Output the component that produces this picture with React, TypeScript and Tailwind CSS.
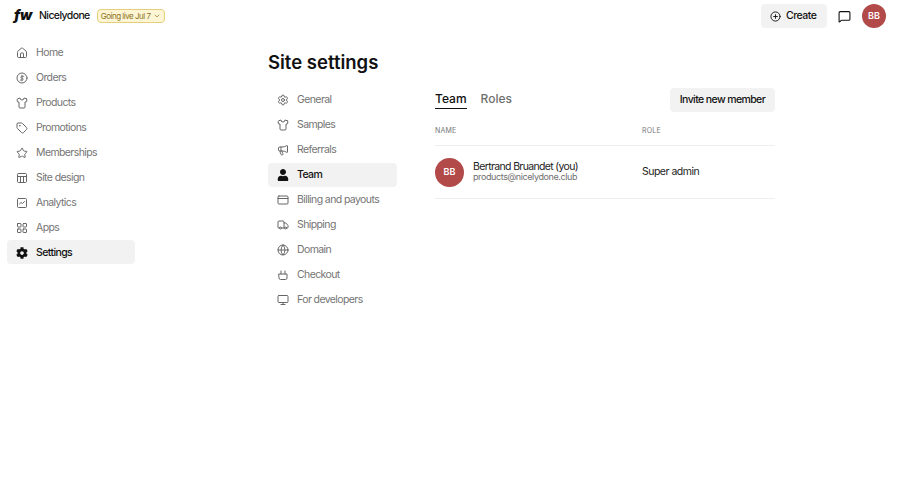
import { ReactNode } from "react"
import {
  ChevronDown,
  CirclePlus,
  Globe,
  Home,
  LayoutGrid,
  Megaphone,
  MessageSquare,
  Monitor,
  Settings,
  Shirt,
  Star,
  Tag,
  Truck,
} from "lucide-react"
import { FaCog, FaUser } from "react-icons/fa"

const iconClass = "w-3 h-3"

function Svg({ children }: { children: ReactNode }) {
  return (
    <svg viewBox="0 0 24 24" fill="none" stroke="currentColor" strokeWidth="2" strokeLinecap="round" strokeLinejoin="round" className={iconClass}>
      {children}
    </svg>
  )
}

const DollarCircle = () => (
  <Svg>
    <circle cx="12" cy="12" r="10" />
    <path d="M15.5 8.5H11a2 2 0 0 0 0 3.8h2a2 2 0 0 1 0 3.8H8.5M12 6.5v11" strokeWidth="1.7" />
  </Svg>
)

const SiteDesign = () => (
  <Svg>
    <rect x="3" y="3" width="18" height="18" rx="2" />
    <path d="M3 9h18M9 9v12M15 9v12" />
  </Svg>
)

const AnalyticsIcon = () => (
  <Svg>
    <rect x="3" y="3" width="18" height="18" rx="2" />
    <path d="m7 14 3-3 3 2 4-4" />
  </Svg>
)

const BillingIcon = () => (
  <Svg>
    <rect x="2" y="4" width="20" height="16" rx="2" />
    <path d="M2 9h20" />
  </Svg>
)

const CheckoutIcon = () => (
  <Svg>
    <path d="M4 10h16v8a3 3 0 0 1-3 3H7a3 3 0 0 1-3-3z" />
    <path d="M8 10V4M16 10V4" />
  </Svg>
)

const mainNav: { label: string; icon: ReactNode; active?: boolean }[] = [
  { label: "Home", icon: <Home className={iconClass} /> },
  { label: "Orders", icon: <DollarCircle /> },
  { label: "Products", icon: <Shirt className={iconClass} /> },
  { label: "Promotions", icon: <Tag className={iconClass} /> },
  { label: "Memberships", icon: <Star className={iconClass} /> },
  { label: "Site design", icon: <SiteDesign /> },
  { label: "Analytics", icon: <AnalyticsIcon /> },
  { label: "Apps", icon: <LayoutGrid className={iconClass} /> },
  { label: "Settings", icon: <FaCog className={iconClass} />, active: true },
]

const settingsNav: { label: string; icon: ReactNode; active?: boolean }[] = [
  { label: "General", icon: <Settings className={iconClass} /> },
  { label: "Samples", icon: <Shirt className={iconClass} /> },
  { label: "Referrals", icon: <Megaphone className={iconClass} /> },
  { label: "Team", icon: <FaUser className={iconClass} />, active: true },
  { label: "Billing and payouts", icon: <BillingIcon /> },
  { label: "Shipping", icon: <Truck className={iconClass} /> },
  { label: "Domain", icon: <Globe className={iconClass} /> },
  { label: "Checkout", icon: <CheckoutIcon /> },
  { label: "For developers", icon: <Monitor className={iconClass} /> },
]

function NavList({ items, rowClass = "" }: { items: typeof mainNav; rowClass?: string }) {
  return (
    <nav className="flex flex-col gap-px">
      {items.map((item) => (
        <div
          key={item.label}
          className={`flex items-center gap-2 h-6 pl-[9px] rounded text-[10.5px] tracking-[-0.6px] whitespace-nowrap ${rowClass} ${
            item.active ? "bg-[#f2f2f2] text-[#111111] font-medium" : "text-[#757575]"
          }`}
        >
          <span className={`flex w-3 justify-center ${item.active ? "text-[#111111]" : "text-[#666666]"}`}>{item.icon}</span>
          {item.label}
        </div>
      ))}
    </nav>
  )
}

function Avatar({ size }: { size: string }) {
  return (
    <div className={`${size} rounded-full bg-[#b24a4a] text-white text-[9px] font-semibold flex items-center justify-center shrink-0`}>
      BB
    </div>
  )
}

export default function App() {
  return (
    <div className="min-h-screen bg-white text-[#111111] font-['Inter',sans-serif]">
      {/* Header */}
      <header className="flex items-center h-8 pl-[14px] pr-[14px]">
        <span className="text-[14px] font-black italic tracking-[-0.6px] leading-none w-[25px] -mt-[2px]">fw</span>
        <span className="text-[10.5px] font-medium tracking-[-0.6px]">Nicelydone</span>
        <div className="ml-[7px] flex items-center gap-[3px] h-[14px] px-[3px] rounded-sm border border-[#e6cf7c] bg-[#fdf5d3] text-[8px] tracking-[-0.5px] text-[#8a7426]">
          Going live Jul 7
          <ChevronDown className="w-2 h-2" />
        </div>
        <div className="ml-auto flex items-center">
          <button className="flex items-center gap-[5px] h-6 w-[66px] pl-[9px] rounded bg-[#f2f2f2] text-[10.5px] tracking-[-0.5px] font-medium">
            <CirclePlus className="w-[11px] h-[11px]" />
            Create
          </button>
          <MessageSquare className="w-[13px] h-[13px] ml-[11px]" />
          <div className="ml-[11px]">
            <Avatar size="w-6 h-6" />
          </div>
        </div>
      </header>

      <div className="flex">
        {/* Sidebar */}
        <aside className="w-[128px] ml-[7px] mt-2 shrink-0">
          <NavList items={mainNav} rowClass="pt-px" />
        </aside>

        <main className="ml-[133px] mt-[19px] flex-1">
          <h1 className="text-[18.5px] font-semibold leading-[22px] h-[25px]">Site settings</h1>
          <div className="flex mt-3">
            <div className="w-[129px] shrink-0">
              <NavList items={settingsNav} />
            </div>

            {/* Team panel */}
            <section className="w-[340px] ml-[38px]">
              <div className="flex items-center justify-between">
                <div className="flex gap-[14px] text-[12px] font-medium -mt-[2px]">
                  <span className="border-b border-[#111111]">Team</span>
                  <span className="text-[#6f6f6f]">Roles</span>
                </div>
                <button className="h-6 w-[105px] rounded bg-[#f2f2f2] text-[10.5px] tracking-[-0.6px] font-medium">Invite new member</button>
              </div>
              <div className="flex mt-[14px] pb-[9px] text-[7px] leading-[10px] tracking-[0.2px] text-[#777777] border-b border-[#eeeeee]">
                <span className="w-[207px]">NAME</span>
                <span>ROLE</span>
              </div>
              <div className="flex items-center h-[53px] border-b border-[#eeeeee]">
                <div className="w-[207px] flex items-center gap-[9px]">
                  <Avatar size="w-[29px] h-[29px]" />
                  <div className="flex flex-col">
                    <div className="text-[10.5px] leading-[10px] tracking-[-0.65px] text-[#222222]">Bertrand Bruandet (you)</div>
                    <div className="text-[9px] leading-[10px] tracking-[-0.4px] text-[#6f6f6f]">products@nicelydone.club</div>
                  </div>
                </div>
                <span className="text-[10.5px] tracking-[-0.5px] text-[#222222]">Super admin</span>
              </div>
            </section>
          </div>
        </main>
      </div>
    </div>
  )
}
